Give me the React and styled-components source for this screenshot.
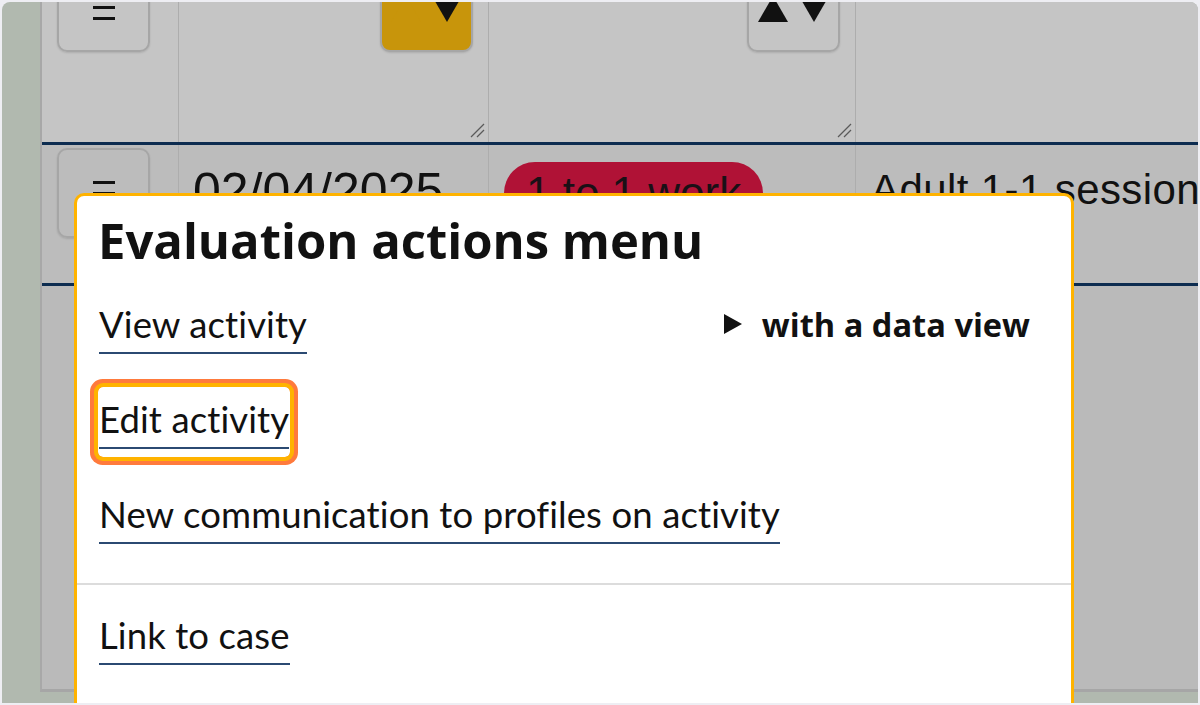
import React from 'react';
import styled, { createGlobalStyle } from 'styled-components';

const Global = createGlobalStyle`
  html, body { margin: 0; padding: 0; background: #eeeef3; }
  body { width: 1200px; height: 705px; overflow: hidden; }
  #root { height: 705px; }
`;

const Frame = styled.div`
  box-sizing: border-box;
  height: 705px;
  padding: 2px;
`;

const Screen = styled.div`
  position: relative;
  height: 701px;
  border-radius: 8px 8px 0 0;
  overflow: hidden;
  background: #b1b9af;
`;

const Table = styled.div`
  margin: -43px 0 0 38px;
  width: 1320px;
  border-left: 2px solid #a8a8a8;
  border-bottom: 3px solid #a6a6a6;
  display: flex;
  flex-direction: column;
`;

const Row = styled.div`
  display: grid;
  grid-template-columns: 137px 310px 367px 1fr;
  box-sizing: border-box;
  height: ${(p) => p.$h}px;
  background: ${(p) => p.$bg};
  border-bottom: ${(p) => (p.$line ? '3px solid #0d2c50' : 'none')};
`;

const Cell = styled.div`
  position: relative;
  box-sizing: border-box;
  border-right: 1px solid #adadad;
  display: flex;
  align-items: flex-start;
  justify-content: ${(p) => (p.$end ? 'flex-end' : 'flex-start')};
  padding: 3px 15px 0 15px;
  font-family: 'Liberation Sans', Arial, sans-serif;
  color: #111;
`;

const IconButton = styled.div`
  box-sizing: border-box;
  width: 93px;
  height: 90px;
  border: 2px solid #a6a6a6;
  border-radius: 10px;
  background: ${(p) => p.$bg || 'transparent'};
  box-shadow: 0 1px 2px rgba(0, 0, 0, 0.12);
  display: flex;
  align-items: center;
  justify-content: center;
`;

const Handle = styled.svg`
  position: absolute;
  right: 3px;
  bottom: 4px;
`;

const DateText = styled.div`
  margin: 15px 0 0 -1px;
  font-size: 50px;
  line-height: 57px;
`;

const Pill = styled.div`
  margin-top: 14px;
  padding: 6px 22px;
  border-radius: 32px;
  background: #b01236;
  font-size: 44px;
  line-height: 50px;
  color: #1a1016;
`;

const Desc = styled.div`
  margin-top: 18px;
  font-size: 42px;
  line-height: 48px;
  white-space: nowrap;
  letter-spacing: 0.4px;
`;

const Dialog = styled.div`
  position: absolute;
  left: 72px;
  top: 191px;
  width: 1000px;
  height: 620px;
  box-sizing: border-box;
  background: #fff;
  border: 3px solid #ffb300;
  border-radius: 10px;
  font-family: Lato, 'Open Sans', sans-serif;
  color: #111;
`;

const Section = styled.div`
  display: flex;
  flex-direction: column;
  align-items: stretch;
  gap: 25px;
  padding: ${(p) => p.$pad};
`;

const Title = styled.h2`
  margin: 0 0 -3px 0;
  font-family: 'Open Sans', Lato, sans-serif;
  font-size: 49px;
  line-height: 60px;
  font-weight: 700;
`;

const ItemRow = styled.div`
  display: flex;
  justify-content: space-between;
  align-items: center;
`;

const MenuLink = styled.a`
  display: inline-block;
  padding: 4px 1px 8px 1px;
  border-radius: 5px;
  color: #111;
  text-decoration: none;
  cursor: pointer;
  box-shadow: ${(p) => (p.$focus ? '0 0 0 4px #ffb300, 0 0 0 8px #ff7a3c' : 'none')};
`;

const Label = styled.span`
  display: block;
  font-size: 36.5px;
  line-height: 56px;
  letter-spacing: 0.1px;
  border-bottom: 2px solid #2b4a72;
  white-space: nowrap;
`;

const Summary = styled.div`
  display: flex;
  align-items: center;
  gap: 20px;
  font-family: 'Open Sans', Lato, sans-serif;
  font-size: 32.6px;
  font-weight: 700;
  margin-top: -6px;
`;

const Divider = styled.div`
  height: 2px;
  background: #dcdcdc;
  margin-top: 31px;
`;

const Bars = () => (
  <svg width="22" height="25" viewBox="0 0 22 25">
    <rect x="0" y="0" width="22" height="3" fill="#111" />
    <rect x="0" y="11" width="22" height="3" fill="#111" />
    <rect x="0" y="22" width="22" height="3" fill="#111" />
  </svg>
);

const Sort = ({ up, down }) => (
  <svg width="71" height="26" viewBox="0 0 71 26" style={{ marginTop: 4 }}>
    <polygon points="0,26 30,26 15,0" fill={up} />
    <polygon points="41,0 71,0 56,26" fill={down} />
  </svg>
);

const Resize = () => (
  <Handle width="16" height="16" viewBox="0 0 16 16">
    <line x1="2" y1="15" x2="15" y2="2" stroke="#5a5a5a" strokeWidth="1.2" />
    <line x1="8" y1="15" x2="15" y2="8" stroke="#5a5a5a" strokeWidth="1.2" />
  </Handle>
);

const Triangle = () => (
  <svg width="18" height="20" viewBox="0 0 18 20">
    <polygon points="0,0 18,10 0,20" fill="#111" />
  </svg>
);

export default function App() {
  return (
    <>
      <Global />
      <Frame>
        <Screen>
          <Table>
            <Row $h={186} $bg="#c5c5c5" $line>
              <Cell>
                <IconButton>
                  <Bars />
                </IconButton>
              </Cell>
              <Cell $end>
                <IconButton $bg="#c8950b">
                  <Sort up="#c8950b" down="#111" />
                </IconButton>
                <Resize />
              </Cell>
              <Cell $end>
                <IconButton>
                  <Sort up="#111" down="#111" />
                </IconButton>
                <Resize />
              </Cell>
              <Cell />
            </Row>
            <Row $h={141} $bg="#bcbcbc" $line>
              <Cell>
                <IconButton>
                  <Bars />
                </IconButton>
              </Cell>
              <Cell>
                <DateText>02/04/2025</DateText>
              </Cell>
              <Cell>
                <Pill>1 to 1 work</Pill>
              </Cell>
              <Cell>
                <Desc>Adult 1-1 session</Desc>
              </Cell>
            </Row>
            <Row $h={403} $bg="#bababa">
              <Cell />
              <Cell />
              <Cell />
              <Cell />
            </Row>
          </Table>

          <Dialog role="dialog" aria-label="Evaluation actions menu">
            <Section $pad="14px 41px 0 21px">
              <Title>Evaluation actions menu</Title>
              <ItemRow>
                <MenuLink>
                  <Label>View activity</Label>
                </MenuLink>
                <Summary>
                  <Triangle />
                  <span>with a data view</span>
                </Summary>
              </ItemRow>
              <ItemRow>
                <MenuLink $focus>
                  <Label>Edit activity</Label>
                </MenuLink>
              </ItemRow>
              <ItemRow>
                <MenuLink>
                  <Label>New communication to profiles on activity</Label>
                </MenuLink>
              </ItemRow>
            </Section>
            <Divider />
            <Section $pad="18px 41px 0 21px">
              <ItemRow>
                <MenuLink>
                  <Label>Link to case</Label>
                </MenuLink>
              </ItemRow>
            </Section>
          </Dialog>
        </Screen>
      </Frame>
    </>
  );
}
